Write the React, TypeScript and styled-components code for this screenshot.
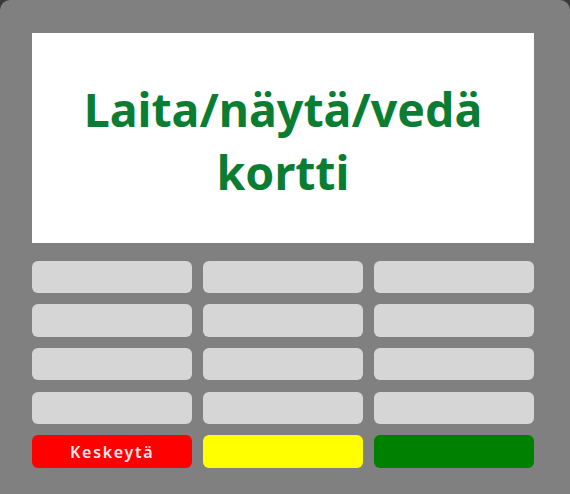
import React from "react";
import styled, { createGlobalStyle } from "styled-components";

const Global = createGlobalStyle`
  html, body {
    margin: 0;
    padding: 0;
    background: #3a3a3a;
    overflow: hidden;
  }
  body {
    font-family: "Noto Sans", "Open Sans", sans-serif;
  }
`;

const Terminal = styled.div`
  box-sizing: border-box;
  width: 570px;
  height: 494px;
  background: #808080;
  border-radius: 10px 10px 0 0;
  padding: 33px 36px 0 32px;
  display: flex;
  flex-direction: column;
  gap: 17.5px;
`;

const Screen = styled.div`
  height: 210px;
  background: #ffffff;
  display: flex;
  align-items: center;
  justify-content: center;
  text-align: center;
`;

const Prompt = styled.div`
  color: #0a7d33;
  font-weight: 700;
  font-size: 46.5px;
  line-height: 63px;
  padding-top: 6px;
`;

const Keypad = styled.div`
  display: grid;
  grid-template-columns: repeat(3, 1fr);
  grid-auto-rows: 32.5px;
  column-gap: 10.5px;
  row-gap: 11.2px;
`;

type Tone = "blank" | "cancel" | "clear" | "ok";

const toneColor: Record<Tone, string> = {
  blank: "#d6d6d6",
  cancel: "#ff0000",
  clear: "#ffff00",
  ok: "#008000",
};

const Key = styled.button<{ $tone: Tone }>`
  border: none;
  margin: 0;
  padding: 0;
  border-radius: 6px;
  background: ${(p) => toneColor[p.$tone]};
  color: #ffe8e8;
  font-family: "Noto Sans", "Open Sans", sans-serif;
  font-size: 16px;
  font-weight: 600;
  letter-spacing: 1.7px;
  display: flex;
  align-items: center;
  justify-content: center;
`;

export default function App() {
  const blanks = Array.from({ length: 12 }, (_, i) => i);
  return (
    <>
      <Global />
      <Terminal>
        <Screen>
          <Prompt>
            Laita/näytä/vedä
            <br />
            kortti
          </Prompt>
        </Screen>
        <Keypad>
          {blanks.map((i) => (
            <Key key={i} $tone="blank" />
          ))}
          <Key $tone="cancel">Keskeytä</Key>
          <Key $tone="clear" />
          <Key $tone="ok" />
        </Keypad>
      </Terminal>
    </>
  );
}
